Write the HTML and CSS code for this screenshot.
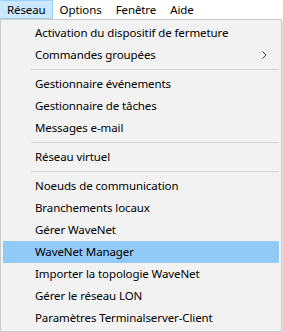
FILE: index.html
```html
<!DOCTYPE html>
<html lang="fr">
<head>
  <meta charset="UTF-8">
  <title>Menu Réseau</title>
  <link rel="stylesheet" href="styles.css">
</head>
<body>
  <div class="menubar">
    <span class="top-item open">Réseau</span>
    <span class="top-item">Options</span>
    <span class="top-item">Fenêtre</span>
    <span class="top-item">Aide</span>
  </div>

  <div class="popup">
    <div class="item">Activation du dispositif de fermeture</div>
    <div class="item sub">Commandes groupées
      <svg class="arrow" width="5" height="8" viewBox="0 0 5 8"><path d="M0.5 0.5 L4 4 L0.5 7.5" fill="none" stroke="#333" stroke-width="1"/></svg>
    </div>
    <div class="sep"></div>
    <div class="item">Gestionnaire événements</div>
    <div class="item">Gestionnaire de tâches</div>
    <div class="item">Messages e-mail</div>
    <div class="sep"></div>
    <div class="item">Réseau virtuel</div>
    <div class="sep"></div>
    <div class="item">Noeuds de communication</div>
    <div class="item">Branchements locaux</div>
    <div class="item">Gérer WaveNet</div>
    <div class="item hover">WaveNet Manager</div>
    <div class="item">Importer la topologie WaveNet</div>
    <div class="item">Gérer le réseau LON</div>
    <div class="item">Paramètres Terminalserver-Client</div>
  </div>
</body>
</html>
```

FILE: styles.css
```css
body { margin: 0; font-family: "Segoe UI", "Noto Sans", sans-serif; font-size: 11.5px; letter-spacing: -0.1px; color: #000; background: #fff; }
.menubar { display: flex; height: 19px; background: #fff; }
.top-item { padding: 0 6px 0 7px; line-height: 17px; height: 17px; border: 1px solid transparent; border-left: none; }
.top-item.open { background: #cce8ff; border-color: #99d1ff; }
.popup { width: 276px; border: 1px solid #cccccc; background: #f2f2f2; padding: 2px; box-shadow: 2px 2px 3px rgba(0,0,0,0.15); }
.item { height: 22px; line-height: 22px; padding-left: 32px; position: relative; }
.item.hover { background: #91c9f7; }
.arrow { position: absolute; right: 12px; top: 7px; }
.sep { height: 7px; display: flex; align-items: center; padding-left: 28px; }
.sep::after { content: ""; flex: 1; height: 1px; background: #d7d7d7; }
```
